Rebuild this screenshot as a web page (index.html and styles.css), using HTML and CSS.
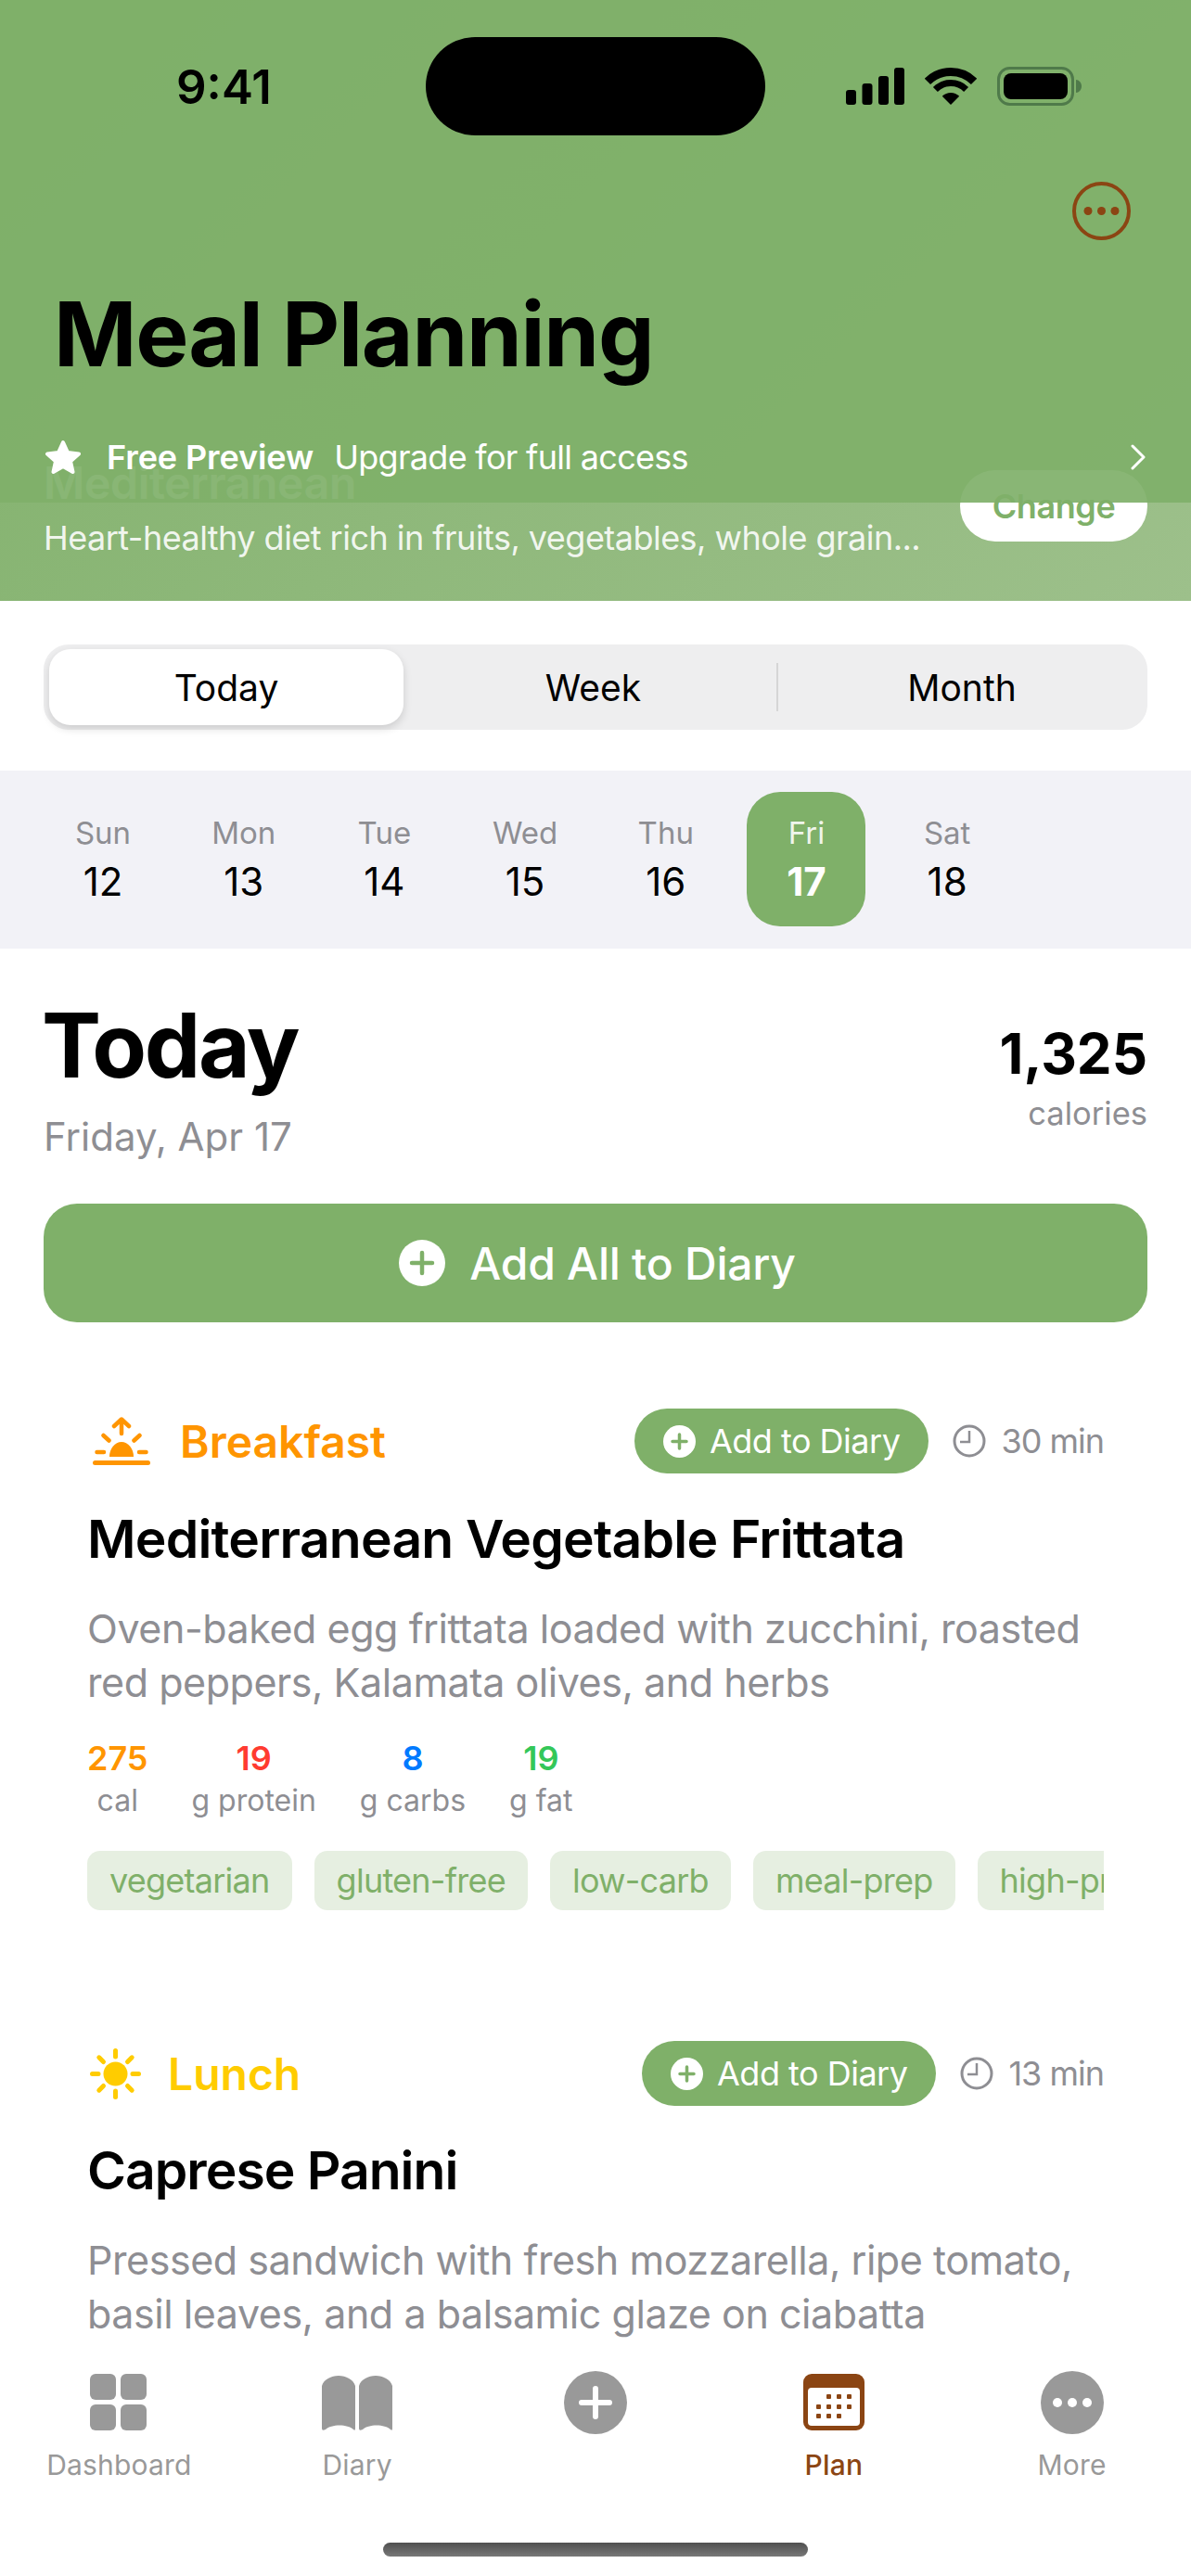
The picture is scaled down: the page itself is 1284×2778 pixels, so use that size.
FILE: index.html
```html
<!DOCTYPE html>
<html>
<head>
  <title>Meal Planning</title>
  <link rel="stylesheet" href="styles.css">
</head>
<body>
  <div class="app">
    <header class="hero">
      <div class="diet">
        <div class="diet-text">
          <h2>Mediterranean</h2>
          <p>Heart-healthy diet rich in fruits, vegetables, whole grain...</p>
        </div>
        <button class="change-btn">Change</button>
      </div>

      <div class="top-bar">
        <div class="status">
          <span class="time">9:41</span>
          <span class="island"></span>
          <span class="status-icons">
            <svg width="63" height="40" viewBox="0 0 63 40"><rect x="0" y="24" width="11" height="16" rx="3"/><rect x="17.5" y="17" width="11" height="23" rx="3"/><rect x="35" y="9" width="11" height="31" rx="3"/><rect x="52" y="0" width="11" height="40" rx="3"/></svg>
            <svg width="56" height="40" viewBox="0 0 56 40"><path d="M28 40L18.8 30.8A13 13 0 0 1 37.2 30.8Z"/><path d="M11.4 23.4A23.5 23.5 0 0 1 44.6 23.4" fill="none" stroke="#000" stroke-width="7"/><path d="M2.9 14.9A35.5 35.5 0 0 1 53.1 14.9" fill="none" stroke="#000" stroke-width="9"/></svg>
            <svg width="91" height="42" viewBox="0 0 91 42"><rect x="1.5" y="1.5" width="80" height="39" rx="12" fill="none" stroke="#4f7a4a" stroke-width="3"/><rect x="7" y="7" width="69" height="28" rx="8"/><path d="M85 14C88 14 91 17 91 21S88 28 85 28Z" fill="#4f7a4a"/></svg>
          </span>
        </div>
        <div class="more-row">
          <svg width="63" height="63" viewBox="0 0 63 63"><circle cx="31.5" cy="31.5" r="29.5" fill="none" stroke="#8b4513" stroke-width="4"/><circle cx="17" cy="31.5" r="4.5" fill="#8b4513"/><circle cx="31.5" cy="31.5" r="4.5" fill="#8b4513"/><circle cx="46" cy="31.5" r="4.5" fill="#8b4513"/></svg>
        </div>
        <h1>Meal Planning</h1>
        <div class="preview">
          <svg width="40" height="38" viewBox="0 0 40 38"><polygon points="20,3 25,14 37,15.5 28,23.5 30.5,35 20,29 9.5,35 12,23.5 3,15.5 15,14" fill="#fff" stroke="#fff" stroke-width="4" stroke-linejoin="round"/></svg>
          <strong>Free Preview</strong>
          <span>Upgrade for full access</span>
          <svg class="chevron" width="16" height="28" viewBox="0 0 16 28"><polyline points="2,2 14,14 2,26" fill="none" stroke="#fff" stroke-width="3" stroke-linecap="round" stroke-linejoin="round"/></svg>
        </div>
      </div>
    </header>

    <main class="scroller">
      <div class="segments">
        <div class="segment active">Today</div>
        <div class="segment">Week</div>
        <div class="segment divided">Month</div>
      </div>

      <div class="days">
        <div class="day"><span>Sun</span><b>12</b></div>
        <div class="day"><span>Mon</span><b>13</b></div>
        <div class="day"><span>Tue</span><b>14</b></div>
        <div class="day"><span>Wed</span><b>15</b></div>
        <div class="day"><span>Thu</span><b>16</b></div>
        <div class="day selected"><span>Fri</span><b>17</b></div>
        <div class="day"><span>Sat</span><b>18</b></div>
      </div>

      <section class="summary">
        <div>
          <h2>Today</h2>
          <p>Friday, Apr 17</p>
        </div>
        <div class="total">
          <strong>1,325</strong>
          <span>calories</span>
        </div>
      </section>

      <button class="add-all">
        <svg width="50" height="50" viewBox="0 0 50 50"><circle cx="25" cy="25" r="25" fill="#fff"/><path d="M25 14V36M14 25H36" stroke="#7fb069" stroke-width="4.5" stroke-linecap="round"/></svg>
        Add All to Diary
      </button>

      <article class="meal">
        <div class="meal-head">
          <svg class="sunrise" width="62" height="52" viewBox="0 0 62 52" fill="none" stroke="#ff9500" stroke-width="4.5" stroke-linecap="round" stroke-linejoin="round"><path d="M31 18V3M23 10L31 2.5L39 10M11.500 20L17.500 25.500M50.500 20L44.500 25.500M4.500 38H12M50 38H57.500"/><path d="M2.500 49.500H59.500" stroke-width="5"/><path d="M18 43A13 16 0 0 1 44 43Z" fill="#ff9500" stroke="none"/></svg>
          <span class="meal-name breakfast">Breakfast</span>
          <button class="add-one">
            <svg width="35" height="35" viewBox="0 0 35 35"><circle cx="17.500" cy="17.500" r="17.500" fill="#fff"/><path d="M17.500 10V25M10 17.500H25" stroke="#7fb069" stroke-width="3.500" stroke-linecap="round"/></svg>
            Add to Diary
          </button>
          <span class="duration">
            <svg width="36" height="36" viewBox="0 0 36 36" fill="none" stroke="#8e8e93" stroke-width="3"><circle cx="18" cy="18" r="16"/><path d="M18 7V19H8" stroke-width="2.500"/></svg>
            30 min
          </span>
        </div>
        <h3>Mediterranean Vegetable Frittata</h3>
        <p class="blurb">Oven-baked egg frittata loaded with zucchini, roasted red peppers, Kalamata olives, and herbs</p>
        <div class="macros">
          <div class="macro"><b class="cal">275</b><span>cal</span></div>
          <div class="macro"><b class="protein">19</b><span>g protein</span></div>
          <div class="macro"><b class="carbs">8</b><span>g carbs</span></div>
          <div class="macro"><b class="fat">19</b><span>g fat</span></div>
        </div>
        <div class="tags">
          <span>vegetarian</span>
          <span>gluten-free</span>
          <span>low-carb</span>
          <span>meal-prep</span>
          <span>high-protein</span>
        </div>
      </article>

      <article class="meal lunch-card">
        <div class="meal-head">
          <svg class="sun" width="55" height="55" viewBox="0 0 55 55" fill="none" stroke="#ffcc00" stroke-width="5" stroke-linecap="round"><circle cx="27.500" cy="27.500" r="13" fill="#ffcc00" stroke="none"/><path d="M27.500 2.500V9M27.500 46V52.500M2.500 27.500H9M46 27.500H52.500M9.800 9.800L14.500 14.500M40.500 40.500L45.200 45.200M45.200 9.800L40.500 14.500M14.500 40.500L9.800 45.200"/></svg>
          <span class="meal-name lunch">Lunch</span>
          <button class="add-one">
            <svg width="35" height="35" viewBox="0 0 35 35"><circle cx="17.500" cy="17.500" r="17.500" fill="#fff"/><path d="M17.500 10V25M10 17.500H25" stroke="#7fb069" stroke-width="3.500" stroke-linecap="round"/></svg>
            Add to Diary
          </button>
          <span class="duration">
            <svg width="36" height="36" viewBox="0 0 36 36" fill="none" stroke="#8e8e93" stroke-width="3"><circle cx="18" cy="18" r="16"/><path d="M18 7V19H8" stroke-width="2.500"/></svg>
            13 min
          </span>
        </div>
        <h3>Caprese Panini</h3>
        <p class="blurb">Pressed sandwich with fresh mozzarella, ripe tomato, basil leaves, and a balsamic glaze on ciabatta</p>
      </article>
    </main>

    <nav class="tabs">
      <div class="tab">
        <svg width="62" height="62" viewBox="0 0 62 62" fill="#999"><rect x="0" y="0" width="28" height="28" rx="6"/><rect x="33" y="0" width="28" height="28" rx="6"/><rect x="0" y="33" width="28" height="28" rx="6"/><rect x="33" y="33" width="28" height="28" rx="6"/></svg>
        <span>Dashboard</span>
      </div>
      <div class="tab">
        <svg width="77" height="62" viewBox="0 0 77 62" fill="#999"><path d="M0 13C2 6 10 2 18 2S34 6 36 13V59Q36 62 34 60C28 54 10 54 4 60Q0 62 0 59Z"/><path d="M40 13C42 6 50 2 58 2S74 6 76 13V59Q76 62 74 60C68 54 50 54 44 60Q40 62 40 59Z"/></svg>
        <span>Diary</span>
      </div>
      <div class="tab">
        <svg width="68" height="68" viewBox="0 0 68 68"><circle cx="34" cy="34" r="34" fill="#999"/><path d="M34 19V49M19 34H49" stroke="#fff" stroke-width="6" stroke-linecap="round"/></svg>
        <span>&nbsp;</span>
      </div>
      <div class="tab current">
        <svg width="66" height="62" viewBox="0 0 66 62"><rect x="0" y="0" width="66" height="61" rx="9" fill="#8b4513"/><rect x="5" y="15" width="56" height="41" rx="4" fill="#fff"/><g fill="#8b4513"><rect x="25" y="22" width="5" height="5" rx="1"/><rect x="36" y="22" width="5" height="5" rx="1"/><rect x="47" y="22" width="5" height="5" rx="1"/><rect x="14" y="33" width="5" height="5" rx="1"/><rect x="25" y="33" width="5" height="5" rx="1"/><rect x="36" y="33" width="5" height="5" rx="1"/><rect x="47" y="33" width="5" height="5" rx="1"/><rect x="14" y="43" width="5" height="5" rx="1"/><rect x="25" y="43" width="5" height="5" rx="1"/><rect x="36" y="43" width="5" height="5" rx="1"/></g></svg>
        <span>Plan</span>
      </div>
      <div class="tab">
        <svg width="68" height="68" viewBox="0 0 68 68"><circle cx="34" cy="34" r="34" fill="#999"/><circle cx="18" cy="34" r="5" fill="#fff"/><circle cx="34" cy="34" r="5" fill="#fff"/><circle cx="50" cy="34" r="5" fill="#fff"/></svg>
        <span>More</span>
      </div>
    </nav>

    <div class="home-bar"><span></span></div>
  </div>
</body>
</html>
```

FILE: styles.css
```css
* {
  box-sizing: border-box;
}

body {
  margin: 0;
  background-color: #fff;
  font-family: Inter, "Liberation Sans", sans-serif;
  color: #000;
}

h1, h2, h3, p {
  margin: 0;
}

button {
  border: none;
  font-family: inherit;
}

.app {
  width: 1284px;
  height: 2778px;
  display: flex;
  flex-direction: column;
  overflow: hidden;
}

/* header */
.hero {
  position: relative;
  flex: none;
  height: 648px;
  padding: 507px 47px 0;
  background: linear-gradient(135deg, #7fb069, #9dc08b);
}

.diet {
  display: flex;
  justify-content: space-between;
  align-items: flex-start;
}

.diet-text h2 {
  margin-top: -15px;
  font-size: 48px;
  line-height: 58px;
  font-weight: 600;
  color: #fff;
  letter-spacing: -0.3px;
}

.diet-text p {
  margin-top: 5px;
  font-size: 36px;
  line-height: 50px;
  letter-spacing: -0.53px;
  color: rgba(255, 255, 255, 0.9);
}

.change-btn {
  width: 202px;
  height: 77px;
  border-radius: 38px;
  background-color: #fff;
  color: #7fb069;
  font-size: 36px;
  font-weight: 600;
  letter-spacing: -0.4px;
}

.top-bar {
  position: absolute;
  top: 0;
  left: 0;
  right: 0;
  height: 542px;
  background-color: rgba(127, 176, 105, 0.92);
}

.status {
  display: flex;
  align-items: center;
  height: 106px;
  margin-top: 40px;
  padding: 0 0 0 190px;
}

.time {
  width: 269px;
  font-size: 51px;
  font-weight: 600;
}

.island {
  width: 366px;
  height: 106px;
  border-radius: 53px;
  background-color: #000;
}

.status-icons {
  display: flex;
  align-items: center;
  gap: 22px;
  margin-left: 87px;
}

.more-row {
  display: flex;
  justify-content: flex-end;
  padding: 50px 65px 0 0;
}

.top-bar h1 {
  margin: 43px 0 0 58px;
  font-size: 96px;
  line-height: 116px;
  font-weight: 700;
  letter-spacing: -1.2px;
}

.preview {
  display: flex;
  align-items: center;
  margin: 53px 0 0 48px;
  padding-right: 49px;
  color: #fff;
  font-size: 36px;
}

.preview strong {
  margin-left: 27px;
  font-weight: 600;
  letter-spacing: -0.1px;
}

.preview span {
  margin-left: 22px;
  letter-spacing: -0.7px;
}

.chevron {
  margin-left: auto;
}

/* main scrolling part */
.scroller {
  flex: 1;
  min-height: 0;
  overflow: hidden;
}

.segments {
  display: grid;
  grid-template-columns: 382px 404px 1fr;
  height: 92px;
  margin: 47px 47px 0;
  padding: 5px 0 5px 6px;
  border-radius: 27px;
  background-color: #eeeeef;
}

.segment {
  display: flex;
  align-items: center;
  justify-content: center;
  font-size: 39px;
}

.segment.active {
  border-radius: 23px;
  background-color: #fff;
  box-shadow: 0 4px 10px rgba(0, 0, 0, 0.14);
}

.segment.divided {
  position: relative;
  margin-left: -2px;
}

.segment.divided::before {
  content: "";
  position: absolute;
  left: 0;
  top: 15px;
  bottom: 15px;
  width: 2px;
  background-color: #d6d6d6;
}

.segment:nth-child(2) {
  padding-left: 5px;
}

.days {
  display: flex;
  gap: 23.7px;
  height: 192px;
  margin-top: 44px;
  padding: 23px 47px;
  background-color: #f2f2f7;
}

.day {
  display: flex;
  flex-direction: column;
  align-items: center;
  width: 128px;
  height: 145px;
  border-radius: 36px;
  padding-top: 23px;
}

.day span {
  font-size: 33px;
  line-height: 42px;
  color: #8e8e93;
}

.day b {
  margin-top: 7px;
  font-size: 42px;
  line-height: 50px;
  font-weight: 400;
}

.day.selected {
  background-color: #7fb069;
}

.day.selected span {
  color: rgba(255, 255, 255, 0.9);
}

.day.selected b {
  color: #fff;
  font-weight: 700;
}

.summary {
  display: flex;
  justify-content: space-between;
  margin: 46px 47px 0;
}

.summary h2 {
  margin-left: -2px;
  font-size: 96px;
  line-height: 116px;
  font-weight: 700;
  letter-spacing: -2.300px;
}

.summary p {
  margin-top: 15px;
  font-size: 42px;
  line-height: 52px;
  color: #8e8e93;
}

.total {
  display: flex;
  flex-direction: column;
  align-items: flex-end;
  padding-top: 31px;
}

.total strong {
  font-size: 60px;
  line-height: 72px;
  font-weight: 700;
}

.total span {
  margin-top: 7px;
  font-size: 34.500px;
  line-height: 44px;
  color: #8e8e93;
}

.add-all {
  display: flex;
  align-items: center;
  justify-content: center;
  gap: 26px;
  width: 1190px;
  height: 128px;
  margin: 46px 47px 0;
  padding-left: 10px;
  border-radius: 36px;
  background-color: #7fb069;
  color: #fff;
  font-size: 48px;
  font-weight: 500;
  letter-spacing: -0.25px;
}

/* meal cards */
.meal {
  padding: 93px 94px 0;
}

.lunch-card {
  padding-top: 141px;
}

.meal-head {
  display: flex;
  align-items: center;
  height: 70px;
}

.sunrise {
  margin-left: 6px;
}

.sun {
  margin-left: 3px;
}

.meal-name {
  margin-left: 32px;
  margin-right: auto;
  font-size: 48px;
  font-weight: 600;
}

.breakfast {
  color: #ff9500;
}

.lunch {
  margin-left: 29px;
  color: #ffcc00;
}

.add-one {
  display: flex;
  align-items: center;
  gap: 15px;
  height: 70px;
  padding: 0 31px;
  border-radius: 35px;
  background-color: #7fb069;
  color: #fff;
  font-size: 36px;
  letter-spacing: -0.5px;
}

.duration {
  display: flex;
  align-items: center;
  gap: 16px;
  margin-left: 26px;
  font-size: 36px;
  letter-spacing: -1px;
  color: #8e8e93;
}

.meal h3 {
  margin-top: 37px;
  font-size: 57px;
  line-height: 68px;
  font-weight: 600;
  letter-spacing: -0.8px;
}

.lunch-card h3 {
  margin-top: 36px;
  letter-spacing: -1px;
}

.blurb {
  margin-top: 33px;
  font-size: 43px;
  line-height: 58px;
  letter-spacing: -0.45px;
  color: #8e8e93;
}

.macros {
  display: flex;
  gap: 47px;
  margin-top: 31px;
}

.macro {
  display: flex;
  flex-direction: column;
  align-items: center;
}

.macro b {
  font-size: 36px;
  line-height: 44px;
  font-weight: 600;
}

.macro span {
  margin-top: 3px;
  font-size: 32px;
  line-height: 42px;
  color: #8e8e93;
}

.cal { color: #ff9500; }
.protein { color: #ff3b30; }
.carbs { color: #007aff; }
.fat { color: #34c759; }

.tags {
  display: flex;
  gap: 24px;
  margin-top: 33px;
  overflow: hidden;
}

.tags span {
  flex: none;
  padding: 0 24px;
  height: 64px;
  line-height: 64px;
  border-radius: 14px;
  background-color: #e6efe1;
  color: #7fb069;
  font-size: 36px;
  letter-spacing: -0.75px;
}

/* bottom tab bar */
.tabs {
  flex: none;
  display: flex;
  height: 173px;
  padding-top: 20px;
  background-color: #fff;
}

.tab {
  flex: 1;
  display: flex;
  flex-direction: column;
  align-items: center;
  height: 130px;
}

.tab svg {
  height: 68px;
}

.tab span {
  margin-top: 14px;
  font-size: 30px;
  line-height: 38px;
  letter-spacing: 0.2px;
  color: #999;
}

.tab.current span {
  font-weight: 500;
  color: #8b4513;
}

.home-bar {
  flex: none;
  display: flex;
  justify-content: center;
  height: 68px;
  padding-top: 32px;
}

.home-bar span {
  width: 458px;
  height: 15px;
  border-radius: 8px;
  background: linear-gradient(#505050, #787878);
}
```
